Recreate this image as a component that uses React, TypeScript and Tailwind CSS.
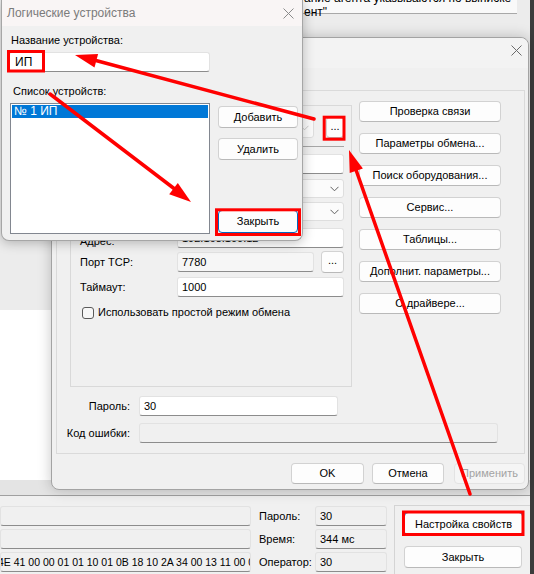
import React from 'react';

function Btn({ children, className = '', focused = false, disabled = false }: { children: React.ReactNode; className?: string; focused?: boolean; disabled?: boolean }) {
  const tone = disabled
    ? 'border-[#e3e3e3] bg-[#f5f5f5] text-[#a3a3a3]'
    : focused
      ? 'border-[#0067c0] bg-[#fdfdfd] text-black'
      : 'border-[#d2d2d2] border-b-[#b9b9b9] bg-[#fdfdfd] text-black';
  return (
    <div className={`flex items-center justify-center rounded-[4px] border ${tone} ${className}`}>
      {children}
    </div>
  );
}

function Field({ value = '', className = '' }: { value?: string; className?: string }) {
  return (
    <div className={`flex items-center overflow-hidden whitespace-nowrap rounded-[3px] border border-[#e2e2e2] border-b-[#8c8c8c] px-[4px] ${className}`}>
      {value}
    </div>
  );
}

function Chevron({ color = '#606060' }: { color?: string }) {
  return (
    <svg width="9" height="6" viewBox="0 0 9 6">
      <path d="M0.5 0.8 L4.5 4.8 L8.5 0.8" fill="none" stroke={color} strokeWidth="1" />
    </svg>
  );
}

function Combo({ className = '', chevron = '#606060' }: { className?: string; chevron?: string }) {
  return (
    <div className={`flex items-center justify-end rounded-[3px] border border-[#dedede] bg-[#fbfbfb] pr-[4px] ${className}`}>
      <Chevron color={chevron} />
    </div>
  );
}

function CloseX({ color = '#6b6b6b' }: { color?: string }) {
  return (
    <svg width="11" height="11" viewBox="0 0 11 11">
      <path d="M0.5 0.5 L10.5 10.5 M10.5 0.5 L0.5 10.5" stroke={color} strokeWidth="1" />
    </svg>
  );
}

function Row({ label, children, className = '' }: { label: string; children: React.ReactNode; className?: string }) {
  return (
    <div className={`flex items-center ${className}`}>
      <div className="w-[97px] shrink-0">{label}</div>
      {children}
    </div>
  );
}

export default function App() {
  return (
    <div className="relative h-[574px] w-[534px] overflow-hidden bg-[#3c3c3c] font-['Liberation_Sans',Arial,sans-serif] text-[11px] leading-[13px] text-black">
      {/* background window */}
      <div className="absolute left-0 top-0 flex h-[574px] w-[530px] flex-col bg-[#f0f0f0]">
        <div className="h-[37px] bg-[#ececec] pl-[296px] pr-[13px]">
          <div className="h-[23px] border-b border-[#a8a8a8] bg-[#f9f9f9] pl-[8px] text-[12px] leading-[14px]">
            <div className="mt-[-9px] whitespace-nowrap">ание агента указываются по выписке</div>
            <div>ент"</div>
          </div>
        </div>
        <div className="h-[273px] bg-[#ececec]" />
        <div className="h-[170px] bg-white" />
        <div className="h-[15px] bg-[#e4e4e4]" />
        <div className="flex flex-1 border-t border-[#a0a0a0]">
          <div className="flex w-[251px] flex-col gap-[3px] pt-[10px]">
            <Field className="h-[20px] bg-[#f0f0f0]" />
            <Field className="h-[20px] bg-[#f0f0f0]" />
            <Field className="h-[20px] bg-[#f0f0f0]" />
          </div>
          <div className="flex w-[64px] flex-col gap-[3px] pl-[8px] pt-[10px]">
            <div className="flex h-[20px] items-center">Пароль:</div>
            <div className="flex h-[20px] items-center">Время:</div>
            <div className="flex h-[20px] items-center">Оператор:</div>
          </div>
          <div className="flex w-[72px] flex-col gap-[3px] pt-[10px]">
            <Field className="h-[20px] bg-[#f0f0f0]" value="30" />
            <Field className="h-[20px] bg-[#f0f0f0]" value="344 мс" />
            <Field className="h-[20px] bg-[#f0f0f0]" value="30" />
          </div>
          <div className="ml-[7px] mt-[9px] flex flex-1 flex-col border-l border-t border-[#d4d4d4] pl-[9px] pt-[6px]">
            <Btn focused className="h-[24px] w-[119px]">Настройка свойств</Btn>
            <Btn className="mt-[10px] h-[22px] w-[118px]">Закрыть</Btn>
          </div>
        </div>
      </div>
      {/* hex dump line, clipped on the left */}
      <div className="absolute left-[1px] top-[553px] flex h-[19px] w-[249px] items-center overflow-hidden whitespace-nowrap">
        <span className="ml-[-3px] text-[10.5px]">4E 41 00 00 01 01 10 01 0B 18 10 2A 34 00 13 11 00 00</span>
      </div>

      {/* properties dialog */}
      <div className="absolute left-[51px] top-[37px] flex h-[453px] w-[478px] flex-col rounded-[8px] border border-[#a3a3a3] bg-[#f0f0f0] shadow-[0_0_14px_rgba(0,0,0,0.22)]">
        <div className="flex h-[30px] items-start justify-end rounded-t-[8px] bg-[#f3f3f3] pr-[6px] pt-[7px]">
          <CloseX />
        </div>
        <div className="ml-[4px] mt-[22px] flex h-[364px] w-[469px] flex-col border border-[#dadada]">
          <div className="flex">
            <div className="ml-[13px] mt-[14px] flex h-[282px] w-[282px] flex-col border border-[#d9d9d9] pl-[9px]">
              <Row label="Тип связи:" className="mt-[11px]">
                <Combo className="h-[21px] w-[137px]" chevron="#c8c8c8" />
                <Btn className="ml-[12px] h-[21px] w-[18px] pb-[3px]">...</Btn>
              </Row>
              <div className="ml-[97px] mt-[8px] h-px w-[167px] bg-[#a6a6a6]" />
              <Row label="Модель:" className="mt-[7px]">
                <Field className="h-[20px] w-[167px] bg-white" />
              </Row>
              <Row label="Протокол:" className="mt-[5px]">
                <Combo className="h-[19px] w-[167px]" />
              </Row>
              <Row label="Интерфейс:" className="mt-[4px]">
                <Combo className="h-[19px] w-[167px]" />
              </Row>
              <Row label="Адрес:" className="mt-[7px] items-end">
                <Field className="h-[20px] w-[167px] items-end bg-white pb-[2px]" value="192.168.100.12" />
              </Row>
              <Row label="Порт TCP:" className="mt-[3px]">
                <Field className="h-[20px] w-[137px] bg-[#f6f6f6]" value="7780" />
                <Btn className="ml-[7px] h-[22px] w-[23px] pb-[3px]">...</Btn>
              </Row>
              <Row label="Таймаут:" className="mt-[4px]">
                <Field className="h-[20px] w-[167px] bg-white" value="1000" />
              </Row>
              <div className="mt-[9px] flex items-center">
                <div className="ml-[2px] h-[12px] w-[12px] rounded-[3px] border border-[#5a5a5a] bg-[#f7f7f7]" />
                <div className="ml-[4px]">Использовать простой режим обмена</div>
              </div>
            </div>
            <div className="ml-[7px] mt-[10px] flex w-[142px] flex-col gap-[11px]">
              <Btn className="h-[21px]">Проверка связи</Btn>
              <Btn className="h-[21px]">Параметры обмена...</Btn>
              <Btn className="h-[21px]">Поиск оборудования...</Btn>
              <Btn className="h-[21px]">Сервис...</Btn>
              <Btn className="h-[21px]">Таблицы...</Btn>
              <Btn className="h-[21px]">Дополнит. параметры...</Btn>
              <Btn className="h-[21px]">О драйвере...</Btn>
            </div>
          </div>
          <div className="mt-[9px] flex items-center">
            <div className="w-[73px] text-right">Пароль:</div>
            <Field className="ml-[9px] h-[20px] w-[199px] bg-white" value="30" />
          </div>
          <div className="mt-[7px] flex items-center">
            <div className="w-[73px] text-right">Код ошибки:</div>
            <Field className="ml-[9px] h-[20px] w-[359px] bg-[#f0f0f0]" />
          </div>
        </div>
        <div className="mt-[9px] flex justify-end gap-[8px] pr-[3px]">
          <Btn className="h-[21px] w-[73px]">OK</Btn>
          <Btn className="h-[21px] w-[72px]">Отмена</Btn>
          <Btn disabled className="ml-[2px] h-[21px] w-[71px]">Применить</Btn>
        </div>
      </div>

      {/* logical devices dialog */}
      <div className="absolute left-[1px] top-0 flex h-[241px] w-[302px] flex-col rounded-b-[8px] border border-t-0 border-[#a6a6a6] bg-[#f0f0f0] shadow-[0_2px_12px_rgba(0,0,0,0.25)]">
        <div className="flex h-[26px] items-center justify-between bg-[#f9f5f5] pl-[5px] pr-[8px]">
          <div className="text-[12px] leading-[14px] text-[#7b7b7b]">Логические устройства</div>
          <CloseX color="#8a8a8a" />
        </div>
        <div className="mt-[8px] pl-[9px]">Название устройства:</div>
        <Field className="ml-[7px] mt-[5px] h-[20px] w-[201px] bg-white pl-[5px] text-[12px]" value="ИП" />
        <div className="ml-[11px] mt-[13px]">Список устройств:</div>
        <div className="mt-[5px] flex">
          <div className="ml-[8px] h-[131px] w-[200px] border border-[#828790] bg-white p-px">
            <div className="flex h-[13px] items-center bg-[#0078d7] pl-[2px] text-[12px] text-white">№ 1 ИП</div>
          </div>
          <div className="ml-[8px] flex w-[80px] flex-col">
            <Btn className="mt-[3px] h-[22px]">Добавить</Btn>
            <Btn className="mt-[10px] h-[22px]">Удалить</Btn>
            <Btn focused className="mt-[50px] h-[23px]">Закрыть</Btn>
          </div>
        </div>
      </div>

      {/* annotations */}
      <svg className="pointer-events-none absolute left-0 top-0" width="534" height="574" viewBox="0 0 534 574">
        <g fill="none" stroke="#ff0000" strokeWidth="3">
          <rect x="8.5" y="51.5" width="35" height="19.5" />
          <rect x="324.2" y="117.2" width="19.8" height="22" />
          <rect x="216.5" y="209.8" width="83" height="24.7" />
          <rect x="403.5" y="512" width="119.5" height="22.5" />
        </g>
        <g stroke="#ff0000" strokeWidth="3.5" strokeLinecap="round">
          <line x1="314" y1="119" x2="94" y2="60" />
          <line x1="50" y1="94" x2="176" y2="190" />
          <line x1="470" y1="494" x2="355" y2="167" />
        </g>
        <g fill="#ff0000">
          <polygon points="75,55 98.1,53.9 94.5,67.5" />
          <polygon points="191,202 169.2,194.2 177.8,183" />
          <polygon points="349,150 362.9,168.4 349.7,173" />
        </g>
      </svg>
    </div>
  );
}
